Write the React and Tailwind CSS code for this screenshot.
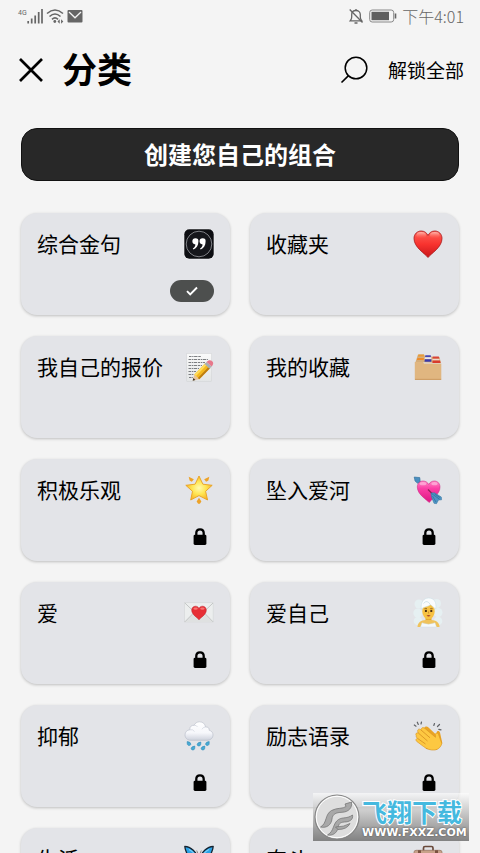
import React from "react";

const HEART =
  "M15 28.5C12 24.5 1 18.5 1 9.5C1 5 4.300 2 8.200 2C11.300 2 13.800 3.800 15 6.500C16.200 3.800 18.700 2 21.800 2C25.700 2 29 5 29 9.500C29 18.500 18 24.500 15 28.500Z";

function Emoji({ children }) {
  return (
    <svg viewBox="0 0 30 30" className="size-[30px] shrink-0 overflow-visible" aria-hidden="true">
      {children}
    </svg>
  );
}

function QuoteIcon() {
  return (
    <Emoji>
      <rect x="-0.3" y="-0.3" width="30.6" height="30.6" rx="5.5" fill="#f4f4f6" />
      <rect x="0.3" y="0.3" width="29.4" height="29.4" rx="5" fill="#0d0e12" />
      <circle cx="15" cy="15" r="12.8" fill="#15161b" stroke="#9b9ca1" strokeWidth="0.8" />
      <g fill="#fff">
        <path d="M11.400 9.300a3 3 0 0 1 3 3.300c0 3.900-1.900 6.600-4.900 8l-.7-1c1.700-1.200 2.500-2.400 2.600-4.200a3.050 3.050 0 1 1 0-6.100z" />
        <path d="M18.600 9.300a3 3 0 0 1 3 3.300c0 3.900-1.900 6.600-4.900 8l-.7-1c1.700-1.200 2.500-2.400 2.600-4.200a3.050 3.050 0 1 1 0-6.100z" />
      </g>
    </Emoji>
  );
}

function HeartIcon() {
  return (
    <Emoji>
      <defs>
        <linearGradient id="heartFill" x1="0" y1="0" x2="0" y2="1">
          <stop offset="0" stopColor="#ff6258" />
          <stop offset="0.5" stopColor="#f8332f" />
          <stop offset="1" stopColor="#c9161a" />
        </linearGradient>
        <linearGradient id="heartShine" x1="0" y1="0" x2="0" y2="1">
          <stop offset="0" stopColor="#ffc0b5" stopOpacity="0.9" />
          <stop offset="1" stopColor="#ff6258" stopOpacity="0" />
        </linearGradient>
      </defs>
      <path d={HEART} fill="url(#heartFill)" stroke="#a81518" strokeWidth="0.8" />
      <ellipse cx="8.200" cy="6.300" rx="4.800" ry="3.200" fill="url(#heartShine)" />
      <ellipse cx="21.800" cy="6.300" rx="4.800" ry="3.200" fill="url(#heartShine)" />
    </Emoji>
  );
}

function MemoIcon() {
  return (
    <Emoji>
      <defs>
        <linearGradient id="memoPaper" x1="0" y1="0" x2="0" y2="1">
          <stop offset="0" stopColor="#fafafa" />
          <stop offset="1" stopColor="#e3e5e6" />
        </linearGradient>
      </defs>
      <rect x="2.800" y="1.500" width="24.800" height="28" fill="url(#memoPaper)" stroke="#cfd1d3" strokeWidth="0.500" />
      <g stroke="#6e7074" strokeWidth="0.900" fill="none" strokeDasharray="2.500 .7 1.300 .6 3.400 .8">
        <path d="M5 4.500H17.500M4.500 7.500H24M4.500 10.500H21M4.500 13.500H18M4.500 16.500H15" />
        <path d="M4.500 19.500H12M4.500 22.500H10M5 25.500H9" />
      </g>
      <path d="M8.700 28.700L10.300 22.500L15.300 27.200Z" fill="#e8c49a" />
      <path d="M8.700 28.700L9.400 26L11.400 27.900Z" fill="#37302a" />
      <path d="M10.300 22.500L21.300 11.300L26.300 15.900L15.300 27.200Z" fill="#f4b81f" />
      <path d="M10.300 22.500L21.300 11.300L23 12.800L12 24Z" fill="#ffdb5a" />
      <path d="M13.900 25.900L24.900 14.600L26.300 15.900L15.300 27.200Z" fill="#bd7d13" />
      <path d="M20.500 12.100L22.600 9.900L27.600 14.500L25.500 16.700Z" fill="#a8b0b4" />
      <path d="M22.600 9.900C24.600 7.700 26.800 8 28.200 9.300C29.700 10.700 29.600 12.400 27.600 14.500Z" fill="#e7788b" />
    </Emoji>
  );
}

function DividersIcon() {
  return (
    <Emoji>
      <path d="M2.500 10L5 2.500H11L12 4H18L19 5H26.500L28 11Z" fill="#d5ad79" />
      <path d="M5.500 2.500H11L10.700 4.500H4.800Z" fill="#e89a3a" />
      <path d="M4.500 6H11L10.600 8H3.800Z" fill="#f08b29" />
      <path d="M12.300 3.300H17.800V5.300H12Z" fill="#4446b4" />
      <path d="M11.900 5.300H18.300V7.200H11.600Z" fill="#e8e6ee" />
      <path d="M11.800 7.200H18.400V9.700H11.500Z" fill="#3739ac" />
      <path d="M19.500 4.500H25.800L26.300 6.800H19.700Z" fill="#d94436" />
      <path d="M19.500 6.800H26.500V8.500H19.500Z" fill="#efd9cb" />
      <path d="M19.600 8.500H27L27.600 11H19.400Z" fill="#d83a2d" />
      <path d="M1.800 10H10L11 11.500H28.300V27Q28.300 28 27.300 28H2.800Q1.800 28 1.800 27Z" fill="#e0b680" />
      <path d="M1.900 26.800H28.200V28H1.900Z" fill="#cf9f66" />
    </Emoji>
  );
}

function StarIcon() {
  return (
    <Emoji>
      <defs>
        <radialGradient id="starFill" cx="0.5" cy="0.500" r="0.600">
          <stop offset="0" stopColor="#fffbb0" />
          <stop offset="0.450" stopColor="#ffe552" />
          <stop offset="1" stopColor="#f3a51c" />
        </radialGradient>
      </defs>
      <path
        d="M15 1L18.900 9.200L28.200 10.300L21.600 16.300L23.600 25L15 20.600L6.700 25L8.500 16.300L1.800 10.300L11.100 9.200Z"
        fill="url(#starFill)"
        stroke="#e9a021"
        strokeWidth="0.900"
        strokeLinejoin="round"
      />
      <g fill="#eda227">
        <path d="M4.700 1.800L9.800 4.200L7.900 6.700L5.600 5.500Z" />
        <path d="M25.300 1.800L20.200 4.200L22.100 6.700L24.400 5.500Z" />
        <path d="M15 22.800L17.400 26.500L15.900 28.700H14.100L12.600 26.500Z" />
      </g>
    </Emoji>
  );
}

function CupidIcon() {
  return (
    <Emoji>
      <defs>
        <linearGradient id="cupidFill" x1="0" y1="0" x2="0" y2="1">
          <stop offset="0" stopColor="#ff86c6" />
          <stop offset="0.350" stopColor="#fb3fa6" />
          <stop offset="1" stopColor="#dc1680" />
        </linearGradient>
      </defs>
      <path d="M3.500 4.500L9 9.500" stroke="#3f7fa8" strokeWidth="1.500" />
      <path d="M1.200 2L6.800 2.600L7.300 7.500L4.500 8.200L2 6Z" fill="#4b8fc0" stroke="#316e99" strokeWidth="0.600" />
      <path
        d="M16.200 27.600C13.600 24.500 4.300 19.500 4.300 12C4.300 8.300 7 6 10 6C12.600 6 14.700 7.400 15.700 9.500C16.700 7.400 18.900 6 21.300 6C24.400 6 27 8.300 27 12C27 19.500 18.500 24 16.200 27.600Z"
        fill="url(#cupidFill)"
        stroke="#c91f7e"
        strokeWidth="0.500"
      />
      <ellipse cx="10" cy="8.700" rx="3.400" ry="1.600" fill="#ffc4e3" opacity="0.600" />
      <ellipse cx="21.500" cy="8.700" rx="3.100" ry="1.600" fill="#ffc4e3" opacity="0.600" />
      <path d="M15 14.500L20 19.500" stroke="#8d2455" strokeWidth="1.300" />
      <path d="M18 18L21.500 17.800L28.300 22L28.600 24.800L25.500 25L23.500 28.700L21 28.300L18.500 22Z" fill="#4e94c5" stroke="#2f709c" strokeWidth="0.500" />
      <path d="M18.500 18.500L26.500 24.200M19.500 21L23 27M21.500 19L27 22.500" stroke="#276591" strokeWidth="0.600" />
    </Emoji>
  );
}

function LetterIcon() {
  return (
    <Emoji>
      <rect x="0.700" y="4.800" width="28.400" height="19.200" fill="#eceeee" stroke="#d1d3d3" strokeWidth="0.500" />
      <path d="M0.800 24L10.500 14H19.500L29 24Z" fill="#dfe1e1" />
      <path d="M0.900 5L15 18.500L29 5M0.900 23.800L10.500 14M29 23.800L19.500 14" fill="none" stroke="#b1b4b4" strokeWidth="0.700" />
      <path
        d="M15 21.800C13.500 19.500 7.700 16.800 7.700 12.200C7.700 9.800 9.400 8.200 11.500 8.200C13 8.200 14.300 9 15 10.400C15.700 9 17 8.200 18.500 8.200C20.600 8.200 22.300 9.800 22.300 12.200C22.300 16.800 16.500 19.500 15 21.800Z"
        fill="#e72f36"
        stroke="#bd1e26"
        strokeWidth="0.500"
      />
      <ellipse cx="11.600" cy="10.600" rx="2.200" ry="1.200" fill="#ff938c" opacity="0.700" />
      <ellipse cx="18.400" cy="10.600" rx="2.200" ry="1.200" fill="#ff938c" opacity="0.700" />
    </Emoji>
  );
}

function SaunaIcon() {
  return (
    <Emoji>
      <g fill="#e6f0f2">
        <circle cx="6" cy="6" r="4.500" />
        <circle cx="23.500" cy="5.500" r="4.500" />
        <circle cx="4.800" cy="15" r="4.500" />
        <circle cx="25" cy="14.500" r="4.500" />
        <circle cx="5" cy="23" r="4.300" />
        <circle cx="25" cy="23" r="4.300" />
      </g>
      <path d="M12.500 18H18.500V23H12.500Z" fill="#e3a82f" />
      <path d="M4.500 29C4.500 24.300 8.500 22.300 12.500 22H18.500C22.500 22.300 26.500 24.300 26.500 29Z" fill="#f0c25a" />
      <path d="M7.500 29L9 24.800Q15.500 27.500 22 24.800L23.500 29Z" fill="#f4f8fa" stroke="#cbdce2" strokeWidth="0.400" />
      <ellipse cx="15.500" cy="13.500" rx="6.200" ry="7.800" fill="#f6c143" />
      <path d="M8.300 11C7.500 4 10.800 0 15.700 0C20.800 0 24 4 22.700 11C20.800 9.500 19.200 7.800 17.500 6.800C14.500 9 11 8.500 8.300 11Z" fill="#fafcfd" stroke="#c4dce4" strokeWidth="0.500" />
      <path d="M10.500 5.500Q14 1 17.500 6.800" fill="none" stroke="#c2dae2" strokeWidth="0.700" />
      <g fill="#4a3015">
        <ellipse cx="12.900" cy="12.900" rx="1.100" ry="1.200" />
        <ellipse cx="18.300" cy="12.900" rx="1.100" ry="1.200" />
      </g>
      <path d="M11.400 10.800Q12.800 10 14 10.800M17.200 10.800Q18.500 10 19.700 10.800" fill="none" stroke="#7d5418" strokeWidth="0.800" />
      <path d="M15.500 13.500V15.500" stroke="#ce912b" strokeWidth="0.900" />
      <path d="M13.500 17.600Q15.600 16.500 17.600 17.600Q15.600 19.300 13.500 17.600Z" fill="#a84029" />
    </Emoji>
  );
}

function RainIcon() {
  return (
    <Emoji>
      <defs>
        <linearGradient id="cloudFill" x1="0" y1="0" x2="0" y2="1">
          <stop offset="0" stopColor="#ffffff" />
          <stop offset="0.600" stopColor="#f6f7fb" />
          <stop offset="1" stopColor="#cdd1dc" />
        </linearGradient>
      </defs>
      <path
        d="M7 19.300C3.500 19.300 1 17 1 14C1 11 3 9 5.800 8.800C5.500 5.800 7.500 4 10 4.300C11.200 2 13.200 0.800 15.500 0.800C19 0.800 21.200 3 21.500 6C24 5.600 25.500 7.300 25.200 9.300C27.500 9.800 29 11.500 29 14C29 17 26.500 19.300 23 19.300Z"
        fill="url(#cloudFill)"
        stroke="#b6bac6"
        strokeWidth="0.600"
      />
      <path d="M5.800 8.800Q9 8 10.500 10.500M10 4.300Q12.500 4 13.500 6M21.500 6Q19 6 18 8.300" fill="none" stroke="#cfd2dc" strokeWidth="0.700" />
      <g fill="#48a9d3" stroke="#2785b4" strokeWidth="0.500">
        <path d="M3.200 20.500Q7 21 6.900 23.200A1.900 1.900 0 0 1 3.400 23.500Q3 22.300 3.200 20.500Z" />
        <path d="M16.800 21Q13 21.500 13.100 23.700A1.900 1.900 0 0 0 16.600 24Q17 22.800 16.800 21Z" />
        <path d="M25.200 20.500Q21.400 21 21.500 23.200A1.900 1.900 0 0 0 25 23.500Q25.400 22.300 25.200 20.500Z" />
        <path d="M10.800 25Q7 25.500 7.100 27.700A1.900 1.900 0 0 0 10.600 28Q11 26.800 10.800 25Z" />
        <path d="M20.800 25Q17 25.500 17.100 27.700A1.900 1.900 0 0 0 20.600 28Q21 26.800 20.800 25Z" />
      </g>
    </Emoji>
  );
}

function ClapIcon() {
  return (
    <Emoji>
      <g stroke="#606266" strokeWidth="1.200" strokeLinecap="round">
        <path d="M1.300 4L3 5.200M4.300 1.200L5.300 3.500M8.500 1L8 3" />
        <path d="M21.500 2.500L20.800 4.500M26.500 3.500L24.500 5.500M28 8.800L25.800 8.300" />
      </g>
      <path
        d="M11 7.200C12 5 14.200 5.200 15.500 6.600L24 14.500L23.700 11.500C23.600 9.500 26.300 9.300 27 11.500L29.300 22L23.500 29L13 28Z"
        fill="#e9a325"
      />
      <path
        d="M3.200 14.500C2 12.800 3.800 11 5.500 12.200L4.700 10.500C4.100 8.500 6.300 7.300 7.800 8.800L8.300 7.700C9 6.300 10.800 6.300 12 7.500L22.500 16.300L22.300 13.500C22.500 11.500 25 11.700 25.600 13.500L28.800 22.500C28.300 25.500 25.500 28.500 22 29C17.500 29.500 13.500 28 10.500 25.500L3.800 20.500C2.200 19 3 17.300 4.700 17.500L3.200 16Z"
        fill="#fdc841"
        stroke="#d79120"
        strokeWidth="0.600"
      />
      <path d="M5.500 12.200L14.500 20M7.800 8.800L17 16.800M4.700 17.500L12.500 23" fill="none" stroke="#d99425" strokeWidth="0.900" />
    </Emoji>
  );
}

function ButterflyIcon() {
  return (
    <Emoji>
      <g fill="#2ca2e6" stroke="#17232f" strokeWidth="1.300" strokeLinejoin="round">
        <path d="M14.300 14C12 8 7 2.500 0.800 2.300C1 6.500 3 8 3.300 11.500C3.700 15.500 8 17.500 13.800 17.500Z" />
        <path d="M15.700 14C18 8 23 2.500 29.200 2.300C29 6.500 27 8 26.700 11.500C26.300 15.500 22 17.500 16.200 17.500Z" />
        <path d="M13.800 17.500C8 17.500 5 20 6 24C7.500 28 12.500 27 14.300 20Z" />
        <path d="M16.200 17.500C22 17.500 25 20 24 24C22.500 28 17.500 27 15.700 20Z" />
      </g>
      <path d="M5 5.500C9 7.500 11.500 10.500 13 14.500M25 5.500C21 7.500 18.500 10.500 17 14.500" fill="none" stroke="#7bd0fa" strokeWidth="1.200" />
      <path d="M12.700 6.500L15 12L17.300 6.500" fill="none" stroke="#5a4a3c" strokeWidth="0.600" />
      <ellipse cx="15" cy="17" rx="1.100" ry="5.500" fill="#35302d" />
    </Emoji>
  );
}

function BriefcaseIcon() {
  return (
    <Emoji>
      <path d="M10.500 7V4Q10.500 2.500 12 2.500H18.500Q20 2.500 20 4V7" fill="none" stroke="#6a4a3c" strokeWidth="1.700" />
      <rect x="1" y="6.300" width="28" height="21" rx="2" fill="#c7a189" stroke="#94705c" strokeWidth="0.700" />
      <path d="M5 6.300H8V27H5ZM22 6.300H25V27H22Z" fill="#79513f" />
      <path d="M1 15H29V16.500H1Z" fill="#94705c" />
    </Emoji>
  );
}

function LockIcon() {
  return (
    <svg viewBox="0 0 14 18" className="h-[18px] w-3.5" role="img" aria-label="已锁定">
      <path d="M3.300 8V5C3.300 2.600 4.900 1.300 7 1.300S10.700 2.600 10.700 5V8" fill="none" stroke="#000" strokeWidth="2.300" />
      <rect x="0.600" y="6.700" width="12.800" height="10.300" rx="1.400" fill="#000" />
    </svg>
  );
}

function CategoryCard({ label, Icon, state }) {
  return (
    <button
      type="button"
      className="flex min-h-[102px] flex-col justify-between rounded-2xl bg-[#e3e4e8] px-4 pb-[13px] pt-4 text-left shadow-[0_1px_3px_rgba(0,0,0,0.22)]"
    >
      <span className="flex w-full items-start justify-between">
        <span className="whitespace-nowrap text-[21px] leading-7 text-black">{label}</span>
        <Icon />
      </span>
      {state === "selected" && (
        <span className="flex h-[22px] w-11 items-center justify-center self-end rounded-full bg-[#4d4f4e]">
          <svg viewBox="0 0 14 12" className="h-3 w-3.5" role="img" aria-label="已选择">
            <path d="M2 6.200L5.200 9.400L12 2.500" fill="none" stroke="#fff" strokeWidth="1.900" />
          </svg>
        </span>
      )}
      {state === "locked" && (
        <span className="flex h-[22px] w-7 items-center justify-center self-end">
          <LockIcon />
        </span>
      )}
    </button>
  );
}

const categories = [
  { label: "综合金句", Icon: QuoteIcon, state: "selected" },
  { label: "收藏夹", Icon: HeartIcon, state: "open" },
  { label: "我自己的报价", Icon: MemoIcon, state: "open" },
  { label: "我的收藏", Icon: DividersIcon, state: "open" },
  { label: "积极乐观", Icon: StarIcon, state: "locked" },
  { label: "坠入爱河", Icon: CupidIcon, state: "locked" },
  { label: "爱", Icon: LetterIcon, state: "locked" },
  { label: "爱自己", Icon: SaunaIcon, state: "locked" },
  { label: "抑郁", Icon: RainIcon, state: "locked" },
  { label: "励志语录", Icon: ClapIcon, state: "locked" },
  { label: "生活", Icon: ButterflyIcon, state: "locked" },
  { label: "奋斗", Icon: BriefcaseIcon, state: "locked" },
];

function StatusBar() {
  return (
    <div className="flex h-8 shrink-0 items-center justify-between pl-[18px] pr-4 text-[#666]">
      <div className="flex items-center gap-[3px]">
        <div className="flex items-start">
          <span className="font-['Roboto',sans-serif] text-[7px] leading-[10px]">4G</span>
          <svg viewBox="0 0 16 16" className="size-4" aria-hidden="true">
            <path d="M1.200 13V15.500M4.700 10.500V15.500M8.200 7.500V15.500M11.700 4V15.500M15 1V15.500" stroke="#666" strokeWidth="1.700" fill="none" />
          </svg>
        </div>
        <svg viewBox="0 0 18 16" className="h-4 w-[18px]" aria-hidden="true">
          <g fill="none" stroke="#666" strokeWidth="1.600">
            <path d="M1 5.500Q9 -1.500 17 5.500" />
            <path d="M3.500 8.500Q9 3.500 14.500 8.500" />
            <path d="M6 11.300Q9 8.500 12 11.300" />
          </g>
          <circle cx="8.800" cy="13.500" r="1.400" fill="#666" />
          <path d="M11.500 13.500L13.700 11.300V15.700ZM17.300 13.500L15.100 11.300V15.700Z" fill="#666" />
        </svg>
        <svg viewBox="0 0 16 14" className="h-3.5 w-4" aria-hidden="true">
          <rect x="0.500" y="1" width="15" height="12.500" rx="1" fill="#666" />
          <path d="M2 3L8 8.800L14 3" fill="none" stroke="#f4f4f4" strokeWidth="1.300" />
        </svg>
      </div>
      <div className="flex items-center gap-[5px]">
        <svg viewBox="0 0 16 16" className="size-4" aria-hidden="true">
          <g fill="none" stroke="#666" strokeWidth="1.300">
            <path d="M2.300 12.800H13.700C12.700 11.700 12.300 10.500 12.300 9V6.500C12.300 4.200 10.500 2.500 8 2.500S3.700 4.200 3.700 6.500V9C3.700 10.500 3.300 11.700 2.300 12.800Z" />
            <path d="M8 1V2.500M6.500 15H9.500M1.700 1.500L14.500 14.500" />
          </g>
        </svg>
        <svg viewBox="0 0 28 14" className="h-3.5 w-7" aria-hidden="true">
          <rect x="0.700" y="1" width="24" height="12" rx="2.500" fill="none" stroke="#888" strokeWidth="1" />
          <rect x="2.500" y="2.800" width="17.500" height="8.400" fill="#5f5f5f" />
          <path d="M26.500 4.500V9.500" stroke="#666" strokeWidth="1.600" />
        </svg>
        <span className="text-base font-light leading-5">下午4:01</span>
      </div>
    </div>
  );
}

function Watermark() {
  return (
    <div className="absolute bottom-3 right-[11px] flex h-12 w-[156px] items-start gap-0.5 bg-linear-to-b from-white/60 to-[#777]/90 pl-px">
      <svg viewBox="0 0 46 46" className="mt-px size-[46px] shrink-0" aria-hidden="true">
        <circle cx="23" cy="23" r="22" fill="#dedede" stroke="#858585" strokeWidth="1.200" />
        <circle cx="23" cy="23" r="20.700" fill="none" stroke="#fff" strokeWidth="1" />
        <g fill="#a8a8a8" stroke="#6f6f6f" strokeWidth="0.700">
          <path d="M6.500 33C13.500 29 10.500 20.500 17.500 16.500C23 13.500 29 15 32 12.500L31 10L37.500 8C38.500 14 34.500 18 28 18.300C22 18.500 18.500 20 18 25C17.300 30.500 13 34.500 6.500 33Z" />
          <path d="M13.500 41C20.500 37 18.500 29.500 24.500 25.500C29 22.800 33 25 38.500 21C39.500 25.500 35.500 28 30.500 28C25.500 28.300 24.500 30.500 24 34C23 39 18.500 42 13.500 41Z" />
          <path d="M21.500 33Q30 33 36 29.500Q33 35.500 24 35.500Z" />
        </g>
      </svg>
      <div className="whitespace-nowrap pt-1">
        <div className="text-[25px] font-bold leading-7 text-[#45b9df] [paint-order:stroke] [-webkit-text-stroke:2px_white]">飞翔下载</div>
        <div className="mt-0.5 font-['DejaVu_Sans',sans-serif] text-[11px] font-bold leading-3 text-white [text-shadow:0_0_2px_#444]">WWW.FXXZ.COM</div>
      </div>
    </div>
  );
}

export default function App() {
  return (
    <div className="relative flex h-screen flex-col overflow-hidden bg-[#f4f4f4] font-['Noto_Sans_CJK_SC',sans-serif] text-black">
      <StatusBar />
      <header className="flex h-[76px] shrink-0 items-center justify-between pl-[18px] pr-4">
        <div className="flex items-center gap-[18px]">
          <button type="button" aria-label="关闭">
            <svg viewBox="0 0 26 26" className="size-[26px]" aria-hidden="true">
              <path d="M2 2L24 24M24 2L2 24" stroke="#000" strokeWidth="2.700" />
            </svg>
          </button>
          <h1 className="pb-1 text-[35px] font-bold leading-10">分类</h1>
        </div>
        <div className="flex items-center gap-5">
          <button type="button" aria-label="搜索">
            <svg viewBox="0 0 28 28" className="size-7" aria-hidden="true">
              <circle cx="16" cy="12" r="10.800" fill="none" stroke="#000" strokeWidth="1.500" />
              <path d="M8.500 19.700L1.500 26.500" stroke="#000" strokeWidth="1.700" />
            </svg>
          </button>
          <button type="button" className="text-[19px] leading-7">
            解锁全部
          </button>
        </div>
      </header>
      <main className="min-h-0 flex-1 overflow-y-auto px-[21px] pb-6 pt-5 [scrollbar-width:none]">
        <button
          type="button"
          className="h-[53px] w-full rounded-2xl border border-[#111] bg-[#282828] pb-0.5 text-2xl font-bold text-white"
        >
          创建您自己的组合
        </button>
        <div className="mt-8 grid grid-cols-2 gap-x-5 gap-y-[21px]">
          {categories.map((category) => (
            <CategoryCard key={category.label} {...category} />
          ))}
        </div>
      </main>
      <Watermark />
    </div>
  );
}
